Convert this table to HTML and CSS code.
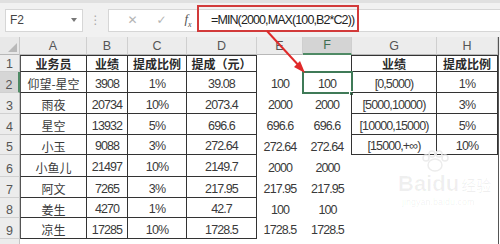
FILE: index.html
```html
<!DOCTYPE html>
<html lang="zh-CN">
<head>
<meta charset="utf-8">
<title>Excel MIN MAX</title>
<link rel="stylesheet" href="styles.css">
</head>
<body>
<div class="app">
  <div class="fbar">
    <div class="namebox"><span class="nb-text">F2</span><span class="dd"></span></div>
    <div class="sep">⋮</div>
    <div class="formula">
      <span class="ic ic-x">✕</span>
      <span class="ic ic-ok">✓</span>
      <span class="ic ic-fx">f<sub>x</sub></span>
      <span class="ftext">=MIN(2000,MAX(100,B2*C2))</span>
    </div>
  </div>

  <div class="sheet">
    <!-- header -->
    <div class="corner"><span class="tri"></span></div>
    <div class="ch">A</div><div class="ch">B</div><div class="ch">C</div><div class="ch">D</div>
    <div class="ch">E</div><div class="ch ch-sel">F</div><div class="ch">G</div><div class="ch">H</div><div class="edge eh"></div>

    <!-- row 1 -->
    <div class="rh">1</div>
    <div class="c t bl bt hd">业务员</div><div class="c t bt hd">业绩</div><div class="c t bt hd">提成比例</div><div class="c t bt hd">提成（元）</div>
    <div class="c"></div><div class="c br"></div>
    <div class="c t bt hd">业绩</div><div class="c t bt hd">提成比例</div><div class="edge"></div>

    <!-- row 2 -->
    <div class="rh rh-sel">2</div>
    <div class="c t bl cn">仰望-星空</div><div class="c t">3908</div><div class="c t">1%</div><div class="c t">39.08</div>
    <div class="c">100</div><div class="c br sel">100<span class="handle"></span></div>
    <div class="c t">[0,5000)</div><div class="c t">1%</div><div class="edge"></div>

    <!-- row 3 -->
    <div class="rh">3</div>
    <div class="c t bl cn">雨夜</div><div class="c t">20734</div><div class="c t">10%</div><div class="c t">2073.4</div>
    <div class="c">2000</div><div class="c br">2000</div>
    <div class="c t">[5000,10000)</div><div class="c t">3%</div><div class="edge"></div>

    <!-- row 4 -->
    <div class="rh">4</div>
    <div class="c t bl cn">星空</div><div class="c t">13932</div><div class="c t">5%</div><div class="c t">696.6</div>
    <div class="c">696.6</div><div class="c br">696.6</div>
    <div class="c t">[10000,15000)</div><div class="c t">5%</div><div class="edge"></div>

    <!-- row 5 -->
    <div class="rh">5</div>
    <div class="c t bl cn">小玉</div><div class="c t">9088</div><div class="c t">3%</div><div class="c t">272.64</div>
    <div class="c">272.64</div><div class="c br">272.64</div>
    <div class="c t">[15000,+∞)</div><div class="c t">10%</div><div class="edge"></div>

    <!-- row 6 -->
    <div class="rh">6</div>
    <div class="c t bl cn">小鱼儿</div><div class="c t">21497</div><div class="c t">10%</div><div class="c t">2149.7</div>
    <div class="c">2000</div><div class="c">2000</div>
    <div class="c"></div><div class="c"></div><div class="edge"></div>

    <!-- row 7 -->
    <div class="rh">7</div>
    <div class="c t bl cn">阿文</div><div class="c t">7265</div><div class="c t">3%</div><div class="c t">217.95</div>
    <div class="c">217.95</div><div class="c">217.95</div>
    <div class="c"></div><div class="c"></div><div class="edge"></div>

    <!-- row 8 -->
    <div class="rh">8</div>
    <div class="c t bl cn">姜生</div><div class="c t">4270</div><div class="c t">1%</div><div class="c t">42.7</div>
    <div class="c">100</div><div class="c">100</div>
    <div class="c"></div><div class="c"></div><div class="edge"></div>

    <!-- row 9 -->
    <div class="rh">9</div>
    <div class="c t bl cn">凉生</div><div class="c t">17285</div><div class="c t">10%</div><div class="c t">1728.5</div>
    <div class="c">1728.5</div><div class="c">1728.5</div>
    <div class="c"></div><div class="c"></div><div class="edge"></div>

    <!-- row 10 (partial) -->
    <div class="rh"></div>
    <div class="c"></div><div class="c"></div><div class="c"></div><div class="c"></div>
    <div class="c"></div><div class="c"></div><div class="c"></div><div class="c"></div><div class="edge"></div>
  </div>

  <div class="redbox"></div>
  <svg class="arrow" width="60" height="60" viewBox="0 0 60 60">
    <line x1="6" y1="2" x2="40" y2="39" stroke="#e02a2a" stroke-width="2"/>
    <polygon points="44,44 33,38 39,32" fill="#e02a2a"/>
  </svg>

  <div class="wm">
    <svg class="wm-paw" width="30" height="22" viewBox="0 0 30 22">
      <ellipse cx="15" cy="15" rx="7" ry="6" fill="none" stroke="#ececec" stroke-width="1.5"/>
      <circle cx="6" cy="8" r="3" fill="none" stroke="#ececec" stroke-width="1.5"/>
      <circle cx="12" cy="4" r="3" fill="none" stroke="#ececec" stroke-width="1.5"/>
      <circle cx="19" cy="4" r="3" fill="none" stroke="#ececec" stroke-width="1.5"/>
      <circle cx="25" cy="8" r="3" fill="none" stroke="#ececec" stroke-width="1.5"/>
    </svg>
    <div class="wm-row"><span class="wm-bai">Bai</span><span class="wm-du">du</span><span class="wm-jy">经验</span></div>
    <div class="wm-url">jingyan.baidu.com</div>
  </div>
</div>
</body>
</html>
```
FILE: styles.css
```css
* { box-sizing: border-box; }
html, body { margin: 0; padding: 0; }
body {
  width: 500px;
  height: 244px;
  overflow: hidden;
  background: #ffffff;
  font-family: "Liberation Sans", "Noto Sans CJK SC", sans-serif;
  color: #333;
}
.app { position: relative; width: 500px; height: 244px; overflow: hidden; }

/* formula bar */
.fbar {
  height: 37px;
  background: #f1f1f1;
  border-top: 3px solid #e0e0e0;
  display: flex;
  align-items: center;
  padding-left: 5px;
}
.namebox {
  width: 78px;
  height: 23px;
  background: #fff;
  border: 1px solid #d6d6d6;
  display: flex;
  align-items: center;
  justify-content: space-between;
  padding: 0 5px 0 4px;
  font-family: "Liberation Sans", sans-serif;
  font-size: 12px;
  color: #444;
}
.dd {
  width: 0; height: 0;
  border-left: 3px solid transparent;
  border-right: 3px solid transparent;
  border-top: 4px solid #777;
}
.sep {
  width: 25px;
  text-align: center;
  color: #aaa;
  font-size: 12px;
  font-family: "DejaVu Sans", sans-serif;
}
.formula {
  flex: 1;
  height: 23px;
  background: #fff;
  border: 1px solid #d6d6d6;
  border-right: none;
  display: flex;
  align-items: center;
  padding-left: 9px;
}
.ic {
  font-family: "DejaVu Sans", sans-serif;
  color: #b4b4b4;
  font-size: 12px;
  width: 29px;
  text-align: center;
}
.ic-fx {
  font-family: "Liberation Serif", serif;
  font-style: italic;
  color: #555;
  font-size: 13px;
  width: 24px;
}
.ic-fx sub { font-size: 8px; }
.ftext {
  margin-left: 11px;
  font-family: "Liberation Sans", sans-serif;
  font-size: 12.5px;
  letter-spacing: -0.9px;
  color: #222;
}

/* sheet grid */
.sheet {
  display: grid;
  grid-template-columns: 20px 67px 41px 59px 70px 46px 49px 85px 61px 2px;
  grid-template-rows: 18px 17px 21px 21px 21px 20px 22px 21px 20px 21px 10px;
}
.corner {
  background: #e8e8e8;
  border-right: 1px solid #c8c8c8;
  border-bottom: 1px solid #b8b8b8;
  position: relative;
}
.tri {
  position: absolute;
  right: 2px; bottom: 2px;
  width: 0; height: 0;
  border-left: 9px solid transparent;
  border-bottom: 9px solid #b9b9b9;
}
.ch {
  background: #ececec;
  border-right: 1px solid #cfcfcf;
  border-bottom: 1px solid #b8b8b8;
  display: flex;
  align-items: center;
  justify-content: center;
  font-family: "Liberation Sans", sans-serif;
  font-size: 12.5px;
  color: #555;
}
.ch-sel {
  background: #d4d4d4;
  border-bottom: 2px solid #4f8a65;
  color: #3d6e52;
}
.rh {
  background: #ececec;
  border-right: 1px solid #c4c4c4;
  border-bottom: 1px solid #d0d0d0;
  display: flex;
  align-items: flex-end;
  justify-content: center;
  font-family: "Liberation Sans", sans-serif;
  font-size: 12.5px;
  color: #555;
}
.rh-sel {
  background: #d6d6d6;
  border-right: 2px solid #4f8a65;
}
.edge {
  border-left: 1px solid #555;
  background: #fff;
}
.eh { background: #ececec; }

.c {
  display: flex;
  align-items: center;
  justify-content: center;
  padding-top: 3px;
  font-family: "Liberation Sans", sans-serif;
  font-size: 12.5px;
  letter-spacing: -0.9px;
  color: #3a3a3a;
  white-space: nowrap;
  position: relative;
}
.t {
  border-right: 1px solid #333;
  border-bottom: 1px solid #333;
}
.bl { border-left: 1px solid #555; }
.bt { border-top: 1px solid #333; }
.br { border-right: 1px solid #333; }
.hd {
  font-family: "Noto Sans CJK SC", sans-serif;
  font-weight: 700;
  font-size: 12px;
  letter-spacing: 0;
  color: #2a2a2a;
  padding-top: 0;
}
.cn {
  font-family: "Noto Sans CJK SC", sans-serif;
  font-size: 12px;
  letter-spacing: 0;
  color: #3a3a3a;
}
.sel {
  outline: 2px solid #3f7a57;
  outline-offset: -1px;
}
.handle {
  position: absolute;
  right: -3px;
  bottom: -3px;
  width: 5px;
  height: 5px;
  background: #3f7a57;
  border: 1px solid #fff;
}

/* annotations */
.redbox {
  position: absolute;
  left: 197px;
  top: 5px;
  width: 162px;
  height: 27px;
  border: 2px solid #d23a3a;
}
.arrow {
  position: absolute;
  left: 261px;
  top: 29px;
}

/* watermark */
.wm {
  position: absolute;
  left: 398px;
  top: 150px;
  width: 100px;
  color: rgba(0,0,0,0.06);
  font-family: "Liberation Sans", sans-serif;
  pointer-events: none;
}
.wm-paw { display: block; margin-left: 22px; }
.wm-row { display: flex; align-items: baseline; line-height: 24px; }
.wm-bai { font-size: 22px; font-weight: 700; }
.wm-du { font-size: 22px; font-weight: 700; }
.wm-jy { font-size: 15px; margin-left: 2px; font-family: "Noto Sans CJK SC", sans-serif; }
.wm-url { font-size: 9px; margin-left: 4px; }
```
